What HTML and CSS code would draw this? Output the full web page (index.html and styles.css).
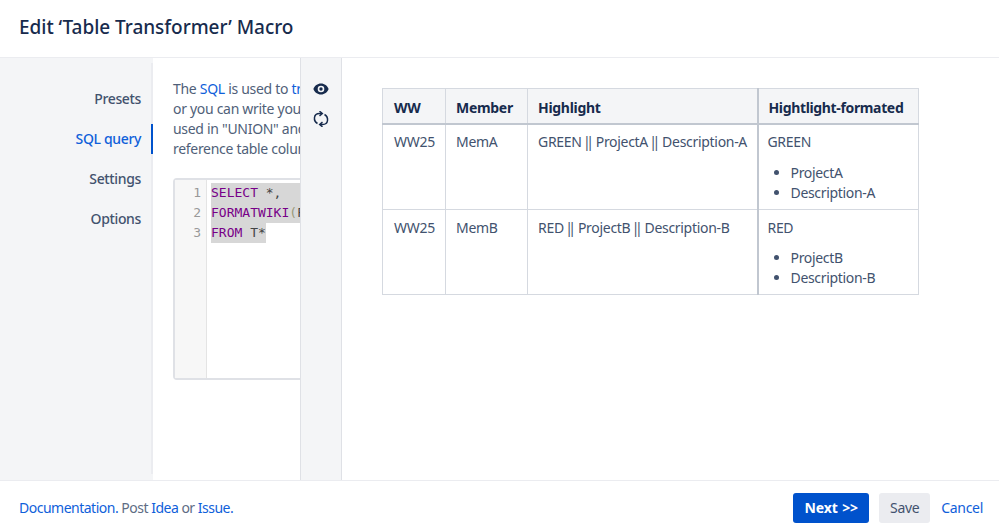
FILE: index.html
```html
<!DOCTYPE html>
<html lang="en">
<head>
<meta charset="utf-8">
<title>Edit Macro</title>
<link rel="stylesheet" href="styles.css">
</head>
<body>
<div class="dialog">
  <header class="head"><h1>Edit ‘Table Transformer’ Macro</h1></header>
  <div class="body">
    <nav class="side">
      <a class="tab">Presets</a>
      <a class="tab active">SQL query</a>
      <a class="tab">Settings</a>
      <a class="tab">Options</a>
    </nav>
    <section class="editor">
      <div class="clip">
        <p class="intro">The <a>SQL</a> is used to <a>tr</a><br>or you can write you<br>used in "UNION" and<br>reference table colum</p>
        <div class="code">
          <div class="gutter"><div>1</div><div>2</div><div>3</div></div>
          <div class="lines">
            <div><span class="sel"><span class="kw">SELECT</span> *,</span></div>
            <div><span class="sel"><span class="kw">FORMATWIKI</span><span class="par">(</span>F</span></div>
            <div><span class="sel"><span class="kw">FROM</span> T*</span></div>
          </div>
        </div>
      </div>
    </section>
    <aside class="tools">
      <svg class="ico" width="16" height="12" viewBox="0 0 16 12"><path fill-rule="evenodd" fill="#172b4d" d="M8 .5C4.400.5 1.600 2.800.4 6c1.200 3.200 4 5.500 7.600 5.500s6.400-2.300 7.600-5.500C14.400 2.800 11.600.5 8 .5zm0 8.800A3.300 3.300 0 1 1 8 2.700a3.300 3.300 0 0 1 0 6.600zM8 4.300a1.700 1.700 0 1 0 0 3.400 1.700 1.700 0 0 0 0-3.400z"/></svg>
      <svg class="ico" width="16" height="16" viewBox="0 0 16 16" fill="none" stroke="#172b4d" stroke-width="1.500"><path d="M4.500 12.500C2 11 1.200 8.800 1.500 6.500 1.800 4 3.800 2.500 6.500 2.500H9"/><path d="M6.500 0.200L9.300 2.500 6.500 4.800"/><path d="M11.500 3.500C14 5 14.800 7.200 14.500 9.500c-.3 2.500-2.300 4-5 4H7"/><path d="M9.500 11.200L6.700 13.500l2.800 2.300"/></svg>
    </aside>
    <main class="preview">
      <table class="grid">
        <thead>
          <tr><th class="c1">WW</th><th class="c2">Member</th><th class="c3">Highlight</th><th class="c4">Hightlight-formated</th></tr>
        </thead>
        <tbody>
          <tr>
            <td class="c1">WW25</td><td>MemA</td><td>GREEN <span class="pp">||</span> ProjectA <span class="pp">||</span> Description-A</td>
            <td class="c4">GREEN<ul><li>ProjectA</li><li>Description-A</li></ul></td>
          </tr>
          <tr class="last">
            <td class="c1">WW25</td><td>MemB</td><td>RED <span class="pp">||</span> ProjectB <span class="pp">||</span> Description-B</td>
            <td class="c4">RED<ul><li>ProjectB</li><li>Description-B</li></ul></td>
          </tr>
        </tbody>
      </table>
    </main>
  </div>
  <footer class="foot">
    <p class="links"><a>Documentation.</a> Post <a>Idea</a> or <a>Issue.</a></p>
    <div class="actions">
      <button class="btn primary">Next &gt;&gt;</button>
      <button class="btn save">Save</button>
      <a class="cancel">Cancel</a>
    </div>
  </footer>
</div>
</body>
</html>
```
FILE: styles.css
```css
* { box-sizing: border-box; }
html, body { margin: 0; height: 100%; }
body {
  font-family: "Noto Sans", "Open Sans", sans-serif;
  font-size: 14px;
  line-height: 20px;
  color: #344563;
  background: #fff;
  overflow: hidden;
}
a { color: #0f60da; }
.dialog { width: 999px; height: 529px; display: flex; flex-direction: column; }
.head {
  height: 58px;
  flex: none;
  padding: 14px 19px 0;
  border-bottom: 1px solid #ebecf0;
}
.head h1 {
  margin: 0;
  font-size: 19px;
  line-height: 26px;
  font-weight: 500;
  color: #172b4d;
  letter-spacing: -.03px;
}
.body { flex: 1; display: flex; min-height: 0; }
.side {
  width: 153px;
  flex: none;
  background: linear-gradient(#ebecf0, #ebecf0) right 5px / 2px calc(100% - 11px) no-repeat, #f4f5f7;
  padding-top: 26px;
  display: flex;
  flex-direction: column;
  gap: 10px;
  align-items: stretch;
}
.tab {
  height: 30px;
  line-height: 30px;
  text-align: right;
  padding-right: 12px;
  font-size: 14px;
  font-weight: 500;
  color: #42526e;
  letter-spacing: -.35px;
}
.tab.active { color: #0f60da; border-right: 2px solid #0052cc; padding-right: 10px; }
.editor { width: 147px; flex: none; overflow: hidden; }
.clip { width: 400px; padding: 21px 0 0 20px; }
.intro { margin: 0; width: 380px; white-space: nowrap; color: #505f79; letter-spacing: -.3px; line-height: 20px; }
.code {
  margin-top: 19px;
  width: 300px;
  height: 202px;
  display: flex;
  border: 2px solid #dfe1e6;
  border-radius: 4px;
  font-family: "DejaVu Sans Mono", monospace;
  font-size: 13px;
  line-height: 20px;
}
.gutter {
  width: 32px;
  flex: none;
  background: #f7f7f7;
  border-right: 1px solid #e4e4e4;
  text-align: right;
  padding: 3px 5px 0 0;
  color: #999;
}
.lines { padding: 3px 0 0 4px; color: #444; white-space: nowrap; }
.sel { background: #d7d7d7; display: inline-block; }
.lines > div:nth-child(2) .sel { padding-right: 60px; }
.lines > div:first-child .sel { padding-right: 100px; }
.kw { color: #708; }
.par { color: #997; }
.tools {
  width: 42px;
  flex: none;
  background: #f4f5f7;
  border-left: 1px solid #dfe1e6;
  border-right: 1px solid #dfe1e6;
  display: flex;
  flex-direction: column;
  align-items: center;
  padding-top: 25px;
  gap: 16px;
}
.ico { display: block; flex: none; }
.preview { flex: 1; padding: 30px 0 0 40px; min-width: 0; }
.grid {
  border-collapse: collapse;
  table-layout: fixed;
  width: 537px;
  border: 1px solid #c1c7d0;
}
.grid th, .grid td { border: 1px solid #d5d9e0; padding: 7px 10px 6px; text-align: left; vertical-align: top; letter-spacing: -.3px; white-space: nowrap; }
.grid td { color: #42526e; }
.grid .last td { padding-top: 8px; }
.grid th { background: #f4f5f7; color: #172b4d; font-weight: 700; height: 35px; padding: 9px 10px 5px; border-bottom: 2px solid #c1c7d0; }
.grid .c1 { width: 63px; padding-left: 11px; }
.grid .c2 { width: 82px; }
.grid .c3 { width: 230px; }
.grid td.c4 { border-left: 2px solid #c1c7d0; padding-left: 9px; letter-spacing: -.32px; }
.grid th.c4 { border-left: 2px solid #c1c7d0; padding-left: 10px; letter-spacing: -.35px; }
.pp { letter-spacing: -4.5px; margin-left: -2px; margin-right: 3px; }
.grid ul { margin: 11px 0 0; padding: 0 0 0 23px; }
.grid .last ul { margin-top: 10px; }
.foot {
  height: 49px;
  flex: none;
  border-top: 1px solid #ebecf0;
  display: flex;
  align-items: center;
  justify-content: space-between;
  padding: 5px 16px 0 19px;
}
.links { margin: 0; color: #5e6c84; letter-spacing: -.5px; }
.actions { display: flex; align-items: center; gap: 10px; }
.btn {
  height: 30px;
  border: 0;
  border-radius: 3px;
  background: #ebecf0;
  color: #42526e;
  font: inherit;
  padding: 0;
  letter-spacing: -.3px;
}
.btn.save { width: 51px; }
.btn.primary { background: #0052cc; color: #fff; font-weight: 700; width: 76px; word-spacing: 1px; letter-spacing: -.1px; }
.cancel { letter-spacing: -.3px; margin-left: 1px; }
```
